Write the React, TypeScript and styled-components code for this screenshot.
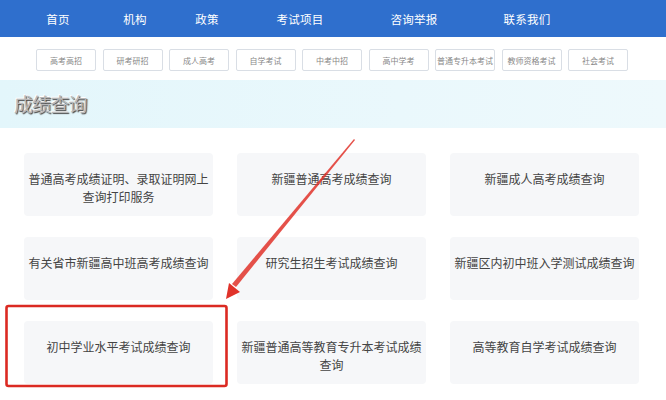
import React from "react";
import styled, { createGlobalStyle } from "styled-components";

const Global = createGlobalStyle`
  html, body { margin: 0; padding: 0; background: #ffffff; }
  body { font-family: "Noto Sans CJK SC", "Noto Sans", sans-serif; width: 666px; height: 400px; overflow: hidden; }
`;

const Page = styled.div`
  position: relative;
  width: 666px;
  height: 400px;
  background: #fff;
`;

const NavBar = styled.nav`
  height: 37px;
  background: #2f6fcd;
  display: flex;
  align-items: center;
  padding-left: 20px;
`;

const NavItem = styled.div<{ $w: number }>`
  width: ${(p) => p.$w}px;
  text-align: center;
  color: #fff;
  font-size: 11.5px;
  letter-spacing: 0.2px;
`;

const TagRow = styled.div`
  display: flex;
  gap: 6.5px;
  padding: 12px 0 0 36px;
  height: 22px;
`;

const Tag = styled.div`
  width: 60px;
  height: 22px;
  box-sizing: border-box;
  border: 1px solid #d9dee5;
  border-radius: 2px;
  display: flex;
  align-items: center;
  justify-content: center;
  font-size: 8px;
  color: #888;
  background: #fff;
  white-space: nowrap;
`;

const TitleBand = styled.div`
  margin-top: 9px;
  height: 48px;
  background: linear-gradient(90deg, #e3f6fb 0%, #eaf8fc 60%, #eef9fc 100%);
  display: flex;
  align-items: center;
  padding-left: 14px;
`;

const Title = styled.h1`
  margin: 0 0 2px 0;
  font-size: 19px;
  font-weight: 400;
  color: #b8b8b8;
  letter-spacing: -0.8px;
  text-shadow: 1px 1px 1px #444, -1px -1px 0 #ffffff;
`;

const Grid = styled.div`
  display: grid;
  grid-template-columns: repeat(3, 189px);
  grid-auto-rows: 63px;
  column-gap: 24px;
  row-gap: 21px;
  padding: 25px 0 0 24px;
`;

const Card = styled.div`
  background: #f6f7f9;
  border-radius: 4px;
  display: flex;
  align-items: flex-start;
  justify-content: center;
  text-align: center;
  padding: 17px 0 0 0;
  box-sizing: border-box;
  font-size: 12px;
  line-height: 17.5px;
  color: #444;
  white-space: nowrap;
`;

const Overlay = styled.svg`
  position: absolute;
  left: 0;
  top: 0;
  pointer-events: none;
`;

const navs: [string, number][] = [
  ["首页", 76],
  ["机构", 78],
  ["政策", 66],
  ["考试项目", 120],
  ["咨询举报", 108],
  ["联系我们", 118],
];

const tags = ["高考高招", "研考研招", "成人高考", "自学考试", "中考中招", "高中学考", "普通专升本考试", "教师资格考试", "社会考试"];

const cards: string[][] = [
  ["普通高考成绩证明、录取证明网上", "查询打印服务"],
  ["新疆普通高考成绩查询"],
  ["新疆成人高考成绩查询"],
  ["有关省市新疆高中班高考成绩查询"],
  ["研究生招生考试成绩查询"],
  ["新疆区内初中班入学测试成绩查询"],
  ["初中学业水平考试成绩查询"],
  ["新疆普通高等教育专升本考试成绩", "查询"],
  ["高等教育自学考试成绩查询"],
];

export default function App() {
  return (
    <Page>
      <Global />
      <NavBar>
        {navs.map(([t, w]) => (
          <NavItem key={t} $w={w}>{t}</NavItem>
        ))}
      </NavBar>
      <TagRow>
        {tags.map((t) => (
          <Tag key={t}>{t}</Tag>
        ))}
      </TagRow>
      <TitleBand>
        <Title>成绩查询</Title>
      </TitleBand>
      <Grid>
        {cards.map((lines, i) => (
          <Card key={i}>
            <span>
              {lines.map((l, j) => (
                <React.Fragment key={j}>
                  {j > 0 && <br />}
                  {l}
                </React.Fragment>
              ))}
            </span>
          </Card>
        ))}
      </Grid>
      <Overlay width="666" height="400" viewBox="0 0 666 400">
        <rect x="6.5" y="306" width="220" height="80" rx="2" fill="none" stroke="#db2a22" strokeWidth="2.6" />
        <polygon points="354,139 355,140 236,287 232,284" fill="#e0322a" opacity="0.85" />
        <polygon points="226,299 229,283 240,292" fill="#e0322a" />
      </Overlay>
    </Page>
  );
}
